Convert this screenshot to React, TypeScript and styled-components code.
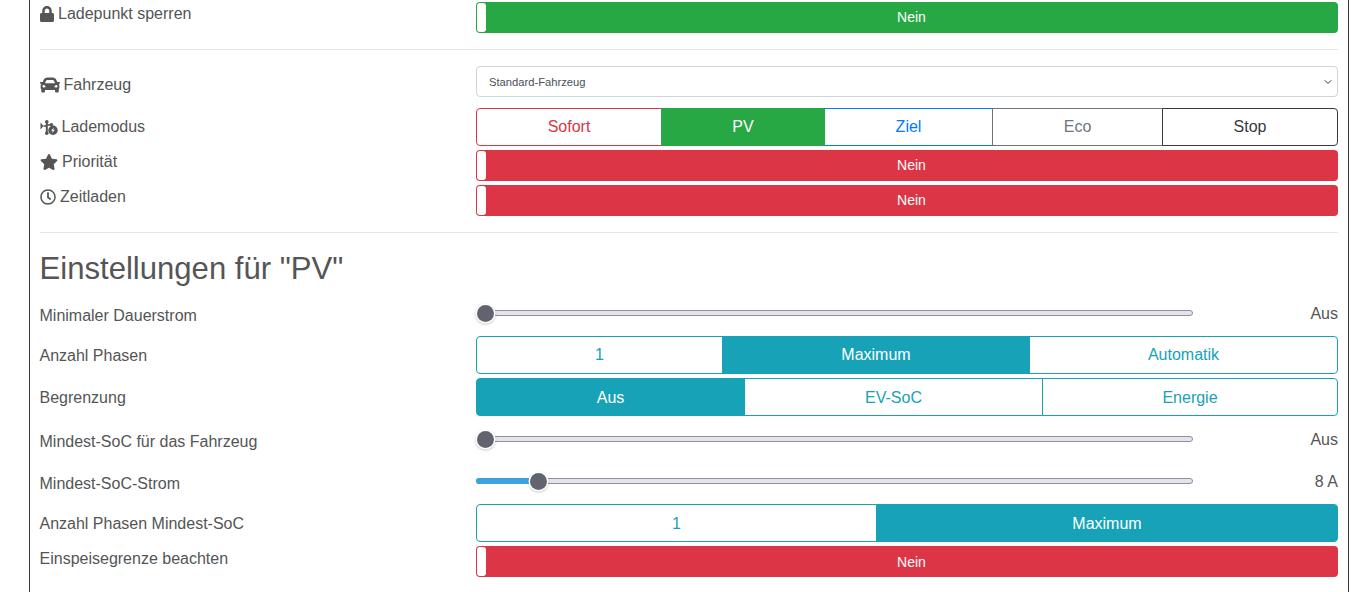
import React from 'react';
import styled, { createGlobalStyle } from 'styled-components';
import { FaLock, FaCar, FaStar, FaRegClock } from 'react-icons/fa';

const Global = createGlobalStyle`
  html, body { margin: 0; padding: 0; background: #fff; overflow: hidden; }
  body { font-family: "Liberation Sans", Arial, sans-serif; font-size: 16px; color: #555; }
`;

const Page = styled.div`
  height: 592px; overflow: hidden; padding-left: 29px; box-sizing: border-box;
`;
const Card = styled.main`
  width: 1320px; height: 592px; box-sizing: border-box;
  border-left: 1px solid #343a40; border-right: 1px solid #343a40;
  padding: 2px 10px 0;
`;
const Row = styled.div<{ $h: number; $mt?: number }>`
  display: grid; grid-template-columns: 436px 862px;
  height: ${p => p.$h}px; margin-top: ${p => p.$mt ?? 0}px;
`;
const Label = styled.label<{ $dy?: number; $gap?: number }>`
  display: flex; align-items: center; gap: ${p => p.$gap ?? 5}px; height: 24px;
  margin-top: ${p => p.$dy ?? 0}px; margin-left: -0.5px; font-size: 16px; line-height: 24px; color: #555;
  svg { flex: none; color: #555; }
`;
const LockIcon = styled(FaLock)`
  margin-left: -1px;
`;
const Divider = styled.hr<{ $mt: number }>`
  border: 0; border-top: 1px solid #e4e6e8; height: 0; margin: ${p => p.$mt}px 0 0;
`;
const Toggle = styled.div<{ $bg: string; $shift?: number }>`
  position: relative; height: 31px; box-sizing: border-box; border-radius: 4px;
  background: ${p => p.$bg}; color: #fff; font-size: 14px; line-height: 29px; text-align: center;
  padding: ${p => 1 + (p.$shift ?? 0)}px 0 0 9px;
`;
const Knob = styled.span`
  position: absolute; left: 1px; top: 1px; bottom: 1px; width: 9px;
  background: #fff; border-radius: 3px;
`;
const Select = styled.div`
  display: flex; align-items: center; justify-content: space-between;
  height: 31px; box-sizing: border-box; border: 1px solid #ced4da; border-radius: 4px;
  padding: 0 5px 0 12px; font-size: 11.2px; color: #495057; background: #fff;
`;
const Seg = styled.div<{ $cols: string }>`
  display: grid; grid-template-columns: ${p => p.$cols}; height: 38px;
`;
const SegBtn = styled.button<{ $c: string; $on?: boolean; $first?: boolean; $last?: boolean; $shift?: number }>`
  all: unset; box-sizing: border-box; height: 38px; text-align: center; font-size: 16px; line-height: 36px;
  padding-top: ${p => p.$shift ?? 0}px;
  position: relative; z-index: ${p => (p.$on ? 1 : 0)};
  border: 1px solid ${p => p.$c};
  margin-left: ${p => (p.$first ? 0 : -1)}px;
  background: ${p => (p.$on ? p.$c : '#fff')};
  color: ${p => (p.$on ? '#fff' : p.$c)};
  border-radius: ${p => (p.$first ? '4px 0 0 4px' : p.$last ? '0 4px 4px 0' : '0')};
`;
const Heading = styled.h3`
  margin: 17px 0 0 -0.5px; font-size: 31.1px; line-height: 38px; font-weight: 400; color: #555; height: 38px;
`;
const SliderRow = styled.div`
  display: flex; align-items: center; justify-content: space-between; height: 24px;
`;
const Track = styled.div`
  position: relative; width: 717px; height: 6px; box-sizing: border-box;
  background: #e4e4ec; border: 1px solid #8f8f9d; border-radius: 3px;
`;
const Fill = styled.div`
  position: absolute; left: -1px; top: -1px; bottom: -1px; border-radius: 3px 0 0 3px; background: #3ea2e0;
`;
const Thumb = styled.div`
  position: absolute; top: 50%; width: 17px; height: 17px; margin-top: -8.5px; margin-left: -9px;
  box-sizing: border-box; border-radius: 50%; background: #62636f;
  box-shadow: 0 0 0 1.5px #fff, 0 1px 3px 1px rgba(0,0,0,.3);
`;
const Value = styled.span`
  font-size: 16px; line-height: 24px; padding-top: 2px; color: #555; text-align: right;
`;

const Chevron = () => (
  <svg width="8" height="8" viewBox="0 0 16 16" fill="none" stroke="#343a40" strokeWidth="2" strokeLinecap="round" strokeLinejoin="round">
    <path d="M2 5l6 6 6-6" />
  </svg>
);

const ModeIcon = () => (
  <svg width="18" height="15" viewBox="0 0 18 15" fill="#555" stroke="none">
    <path d="M0.5 2.5l3 3.5-3 3.5z" />
    <rect x="3.5" y="5.2" width="3" height="1.6" />
    <rect x="5.8" y="1" width="2" height="13" />
    <circle cx="6.8" cy="1.8" r="1.8" />
    <circle cx="6.8" cy="13.2" r="1.8" />
    <rect x="7" y="4.2" width="4" height="1.6" />
    <circle cx="11.4" cy="4.6" r="1.7" />
    <circle cx="13" cy="10.3" r="4.7" />
    <path d="M14 7.4l-3 3.4h1.8l-.9 2.4 3-3.4h-1.8z" fill="#fff" />
  </svg>
);

const Slider = ({ value, pos }: { value: string; pos: number }) => (
  <SliderRow>
    <Track>
      {pos > 10 && <Fill style={{ width: pos }} />}
      <Thumb style={{ left: pos }} />
    </Track>
    <Value>{value}</Value>
  </SliderRow>
);

type B = { t: string; c: string; on?: boolean };
const Group = ({ cols, items, shift }: { cols: string; items: B[]; shift?: number }) => (
  <Seg $cols={cols}>
    {items.map((b, i) => (
      <SegBtn key={b.t} $c={b.c} $on={b.on} $shift={shift} $first={i === 0} $last={i === items.length - 1}>{b.t}</SegBtn>
    ))}
  </Seg>
);

const INFO = '#17a2b8', RED = '#dc3545', GREEN = '#28a745';

export default function App() {
  return (
    <Page>
      <Global />
      <Card>
        <Row $h={31}>
          <Label $dy={0} $gap={3.5}><LockIcon size={16} />Ladepunkt sperren</Label>
          <Toggle $bg={GREEN}><Knob />Nein</Toggle>
        </Row>
        <Divider $mt={16} />
        <Row $h={31} $mt={16}>
          <Label $dy={7} $gap={4}><FaCar size={20} />Fahrzeug</Label>
          <Select>Standard-Fahrzeug<Chevron /></Select>
        </Row>
        <Row $h={38} $mt={11}>
          <Label $dy={7} $gap={4}><ModeIcon />Lademodus</Label>
          <Group cols="186px 163px 168px 170px 175px" items={[
            { t: 'Sofort', c: RED }, { t: 'PV', c: GREEN, on: true }, { t: 'Ziel', c: '#007bff' },
            { t: 'Eco', c: '#6c757d' }, { t: 'Stop', c: '#343a40' },
          ]} />
        </Row>
        <Row $h={31} $mt={4}>
          <Label $dy={0} $gap={4.5}><FaStar size={18} />Priorität</Label>
          <Toggle $bg={RED}><Knob />Nein</Toggle>
        </Row>
        <Row $h={31} $mt={4}>
          <Label $dy={0} $gap={4.5}><FaRegClock size={16} />Zeitladen</Label>
          <Toggle $bg={RED}><Knob />Nein</Toggle>
        </Row>
        <Divider $mt={16} />
        <Heading>Einstellungen für "PV"</Heading>
        <Row $h={24} $mt={13}>
          <Label $dy={3}>Minimaler Dauerstrom</Label>
          <Slider value="Aus" pos={9} />
        </Row>
        <Row $h={38} $mt={11}>
          <Label $dy={8}>Anzahl Phasen</Label>
          <Group cols="247px 307px 308px" items={[
            { t: '1', c: INFO }, { t: 'Maximum', c: INFO, on: true }, { t: 'Automatik', c: INFO },
          ]} />
        </Row>
        <Row $h={38} $mt={4}>
          <Label $dy={8}>Begrenzung</Label>
          <Group cols="269px 298px 295px" shift={1} items={[
            { t: 'Aus', c: INFO, on: true }, { t: 'EV-SoC', c: INFO }, { t: 'Energie', c: INFO },
          ]} />
        </Row>
        <Row $h={24} $mt={11}>
          <Label $dy={3}>Mindest-SoC für das Fahrzeug</Label>
          <Slider value="Aus" pos={9} />
        </Row>
        <Row $h={24} $mt={18}>
          <Label $dy={3}>Mindest-SoC-Strom</Label>
          <Slider value="8 A" pos={62} />
        </Row>
        <Row $h={38} $mt={11}>
          <Label $dy={8}>Anzahl Phasen Mindest-SoC</Label>
          <Group cols="401px 461px" shift={1} items={[
            { t: '1', c: INFO }, { t: 'Maximum', c: INFO, on: true },
          ]} />
        </Row>
        <Row $h={31} $mt={4}>
          <Label $dy={1}>Einspeisegrenze beachten</Label>
          <Toggle $bg={RED} $shift={1}><Knob />Nein</Toggle>
        </Row>
      </Card>
    </Page>
  );
}
